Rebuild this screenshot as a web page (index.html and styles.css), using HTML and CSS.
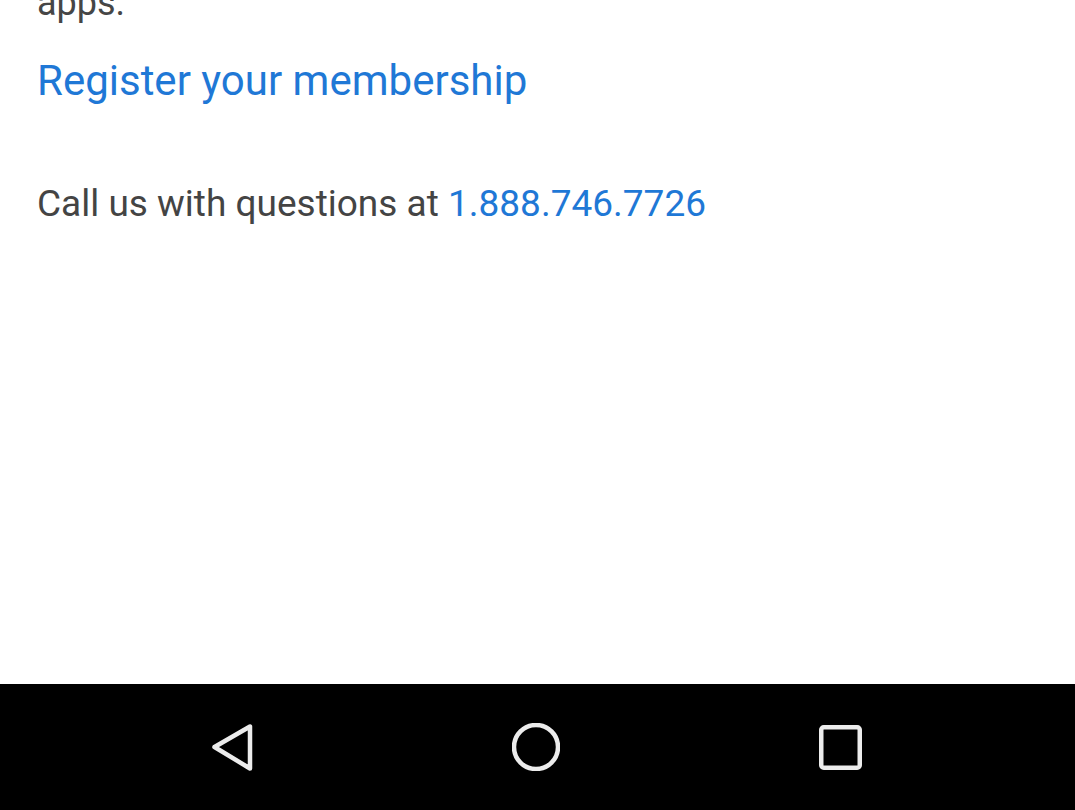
FILE: index.html
```html
<!DOCTYPE html>
<html lang="en">
<head>
<meta charset="utf-8">
<title>Membership</title>
<link rel="stylesheet" href="styles.css">
</head>
<body>
<main class="content">
  <p class="intro">apps.</p>
  <a class="register" href="#">Register your membership</a>
  <p class="call">Call us with questions at <a class="phone" href="#">1.888.746.7726</a></p>
</main>
<nav class="navbar">
  <span class="nav-btn">
    <svg viewBox="0 0 48 48" width="48" height="48"><polygon points="6.5,24 42,3.5 42,45.5" fill="none" stroke="#ececec" stroke-width="4.5" stroke-linejoin="round"/></svg>
  </span>
  <span class="nav-btn">
    <svg viewBox="0 0 48 48" width="48" height="48"><circle cx="24" cy="24" r="22" fill="none" stroke="#ececec" stroke-width="4.5"/></svg>
  </span>
  <span class="nav-btn">
    <svg viewBox="0 0 48 48" width="48" height="48"><rect x="5.25" y="4.25" width="38.5" height="40.5" rx="2.5" fill="none" stroke="#ececec" stroke-width="4.5"/></svg>
  </span>
</nav>
</body>
</html>
```
FILE: styles.css
```css
html, body {
  margin: 0;
  padding: 0;
  background: #fff;
}
body {
  width: 1075px;
  height: 810px;
  overflow: hidden;
  font-family: Roboto, "Liberation Sans", sans-serif;
  display: flex;
  flex-direction: column;
}
.content {
  height: 684px;
  overflow: hidden;
  padding: 0 37px;
  box-sizing: border-box;
  display: flex;
  flex-direction: column;
  align-items: flex-start;
}
.intro {
  margin: -21px 0 0 0;
  font-size: 36px;
  line-height: 48px;
  color: #464646;
}
.register {
  margin-top: 26px;
  font-size: 42px;
  line-height: 56px;
  color: #1f78d6;
  text-decoration: none;
}
.call {
  margin: 71px 0 0 0;
  font-size: 37px;
  line-height: 48px;
  color: #444;
}
.phone {
  color: #1f78d6;
  text-decoration: none;
}
.navbar {
  height: 126px;
  background: #000;
  display: flex;
  justify-content: center;
  align-items: center;
  gap: 256px;
  padding-right: 4px;
}
.nav-btn {
  width: 48px;
  height: 48px;
  display: block;
}
.nav-btn svg {
  display: block;
}
```
